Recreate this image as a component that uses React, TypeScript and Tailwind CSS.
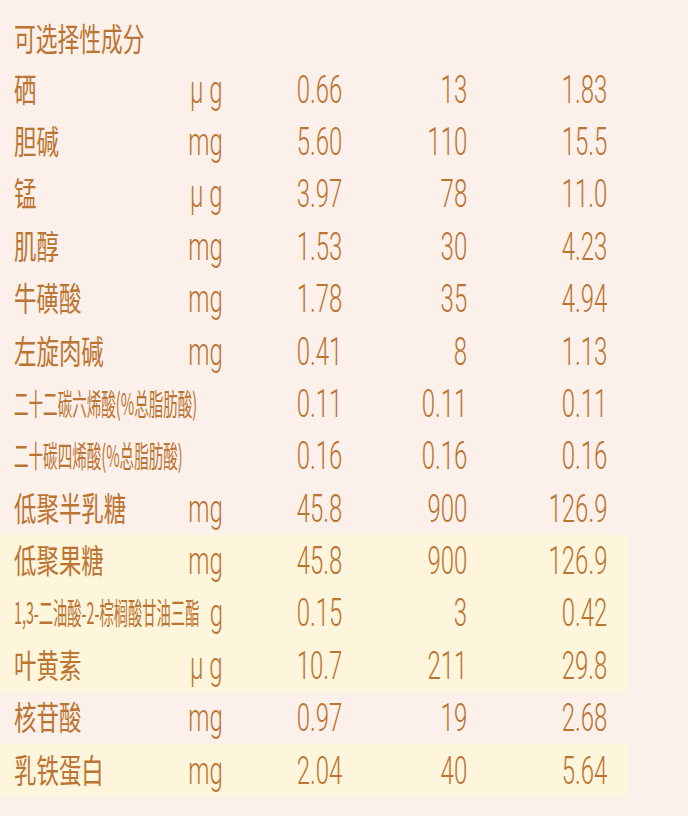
import React from "react"

type Row = {
  name: string
  unit: string
  a: string
  b: string
  c: string
  hl?: boolean
  long?: "dha" | "ara" | "opo"
}

const rows: Row[] = [
  { name: "硒", unit: "µ g", a: "0.66", b: "13", c: "1.83" },
  { name: "胆碱", unit: "mg", a: "5.60", b: "110", c: "15.5" },
  { name: "锰", unit: "µ g", a: "3.97", b: "78", c: "11.0" },
  { name: "肌醇", unit: "mg", a: "1.53", b: "30", c: "4.23" },
  { name: "牛磺酸", unit: "mg", a: "1.78", b: "35", c: "4.94" },
  { name: "左旋肉碱", unit: "mg", a: "0.41", b: "8", c: "1.13" },
  { name: "二十二碳六烯酸(%总脂肪酸)", unit: "", a: "0.11", b: "0.11", c: "0.11", long: "dha" },
  { name: "二十碳四烯酸(%总脂肪酸)", unit: "", a: "0.16", b: "0.16", c: "0.16", long: "ara" },
  { name: "低聚半乳糖", unit: "mg", a: "45.8", b: "900", c: "126.9" },
  { name: "低聚果糖", unit: "mg", a: "45.8", b: "900", c: "126.9", hl: true },
  { name: "1,3-二油酸-2-棕榈酸甘油三酯", unit: "g", a: "0.15", b: "3", c: "0.42", hl: true, long: "opo" },
  { name: "叶黄素", unit: "µ g", a: "10.7", b: "211", c: "29.8", hl: true },
  { name: "核苷酸", unit: "mg", a: "0.97", b: "19", c: "2.68" },
  { name: "乳铁蛋白", unit: "mg", a: "2.04", b: "40", c: "5.64", hl: true },
]

const cjk = "font-['Noto_Sans_CJK_SC',sans-serif]"
const num = "font-['Roboto','Liberation_Sans',sans-serif] font-light"

function Num({ children }: { children: React.ReactNode }) {
  return (
    <div className="flex justify-end">
      <span className={`${num} inline-block origin-right scale-x-[0.63] whitespace-nowrap text-[38px] leading-none`}>
        {children}
      </span>
    </div>
  )
}

function Name({ row }: { row: Row }) {
  if (row.long === "dha" || row.long === "ara") {
    return (
      <span className={`${cjk} inline-block origin-left scale-x-[0.485] whitespace-nowrap text-[30px] leading-none`}>
        {row.name}
      </span>
    )
  }
  if (row.long === "opo") {
    return (
      <span className={`${cjk} inline-block origin-left scale-x-[0.476] whitespace-nowrap text-[30px] leading-none`}>
        {row.name}
      </span>
    )
  }
  return (
    <span className={`${cjk} inline-block origin-left scale-x-[0.68] whitespace-nowrap text-[33px] leading-none`}>
      {row.name}
    </span>
  )
}

export default function App() {
  return (
    <div className="min-h-[816px] w-[688px] overflow-hidden bg-[#fcf0ea] pt-[11px] text-[#bb7431]">
      <div className="flex h-[52.4px] items-center pl-[14px]">
        <span className={`${cjk} inline-block origin-left scale-x-[0.68] whitespace-nowrap text-[32px] leading-none`}>
          可选择性成分
        </span>
      </div>
      {rows.map((row) => (
        <div
          key={row.name}
          className={`grid h-[52.4px] w-[628px] grid-cols-[170px_39px_119px_125px_140px] items-center pl-[14px] ${
            row.hl ? "bg-[#fdf5dc]" : ""
          }`}
        >
          <div className="min-w-0">
            <Name row={row} />
          </div>
          {row.unit ? <Num>{row.unit}</Num> : <div />}
          <Num>{row.a}</Num>
          <Num>{row.b}</Num>
          <Num>{row.c}</Num>
        </div>
      ))}
    </div>
  )
}
